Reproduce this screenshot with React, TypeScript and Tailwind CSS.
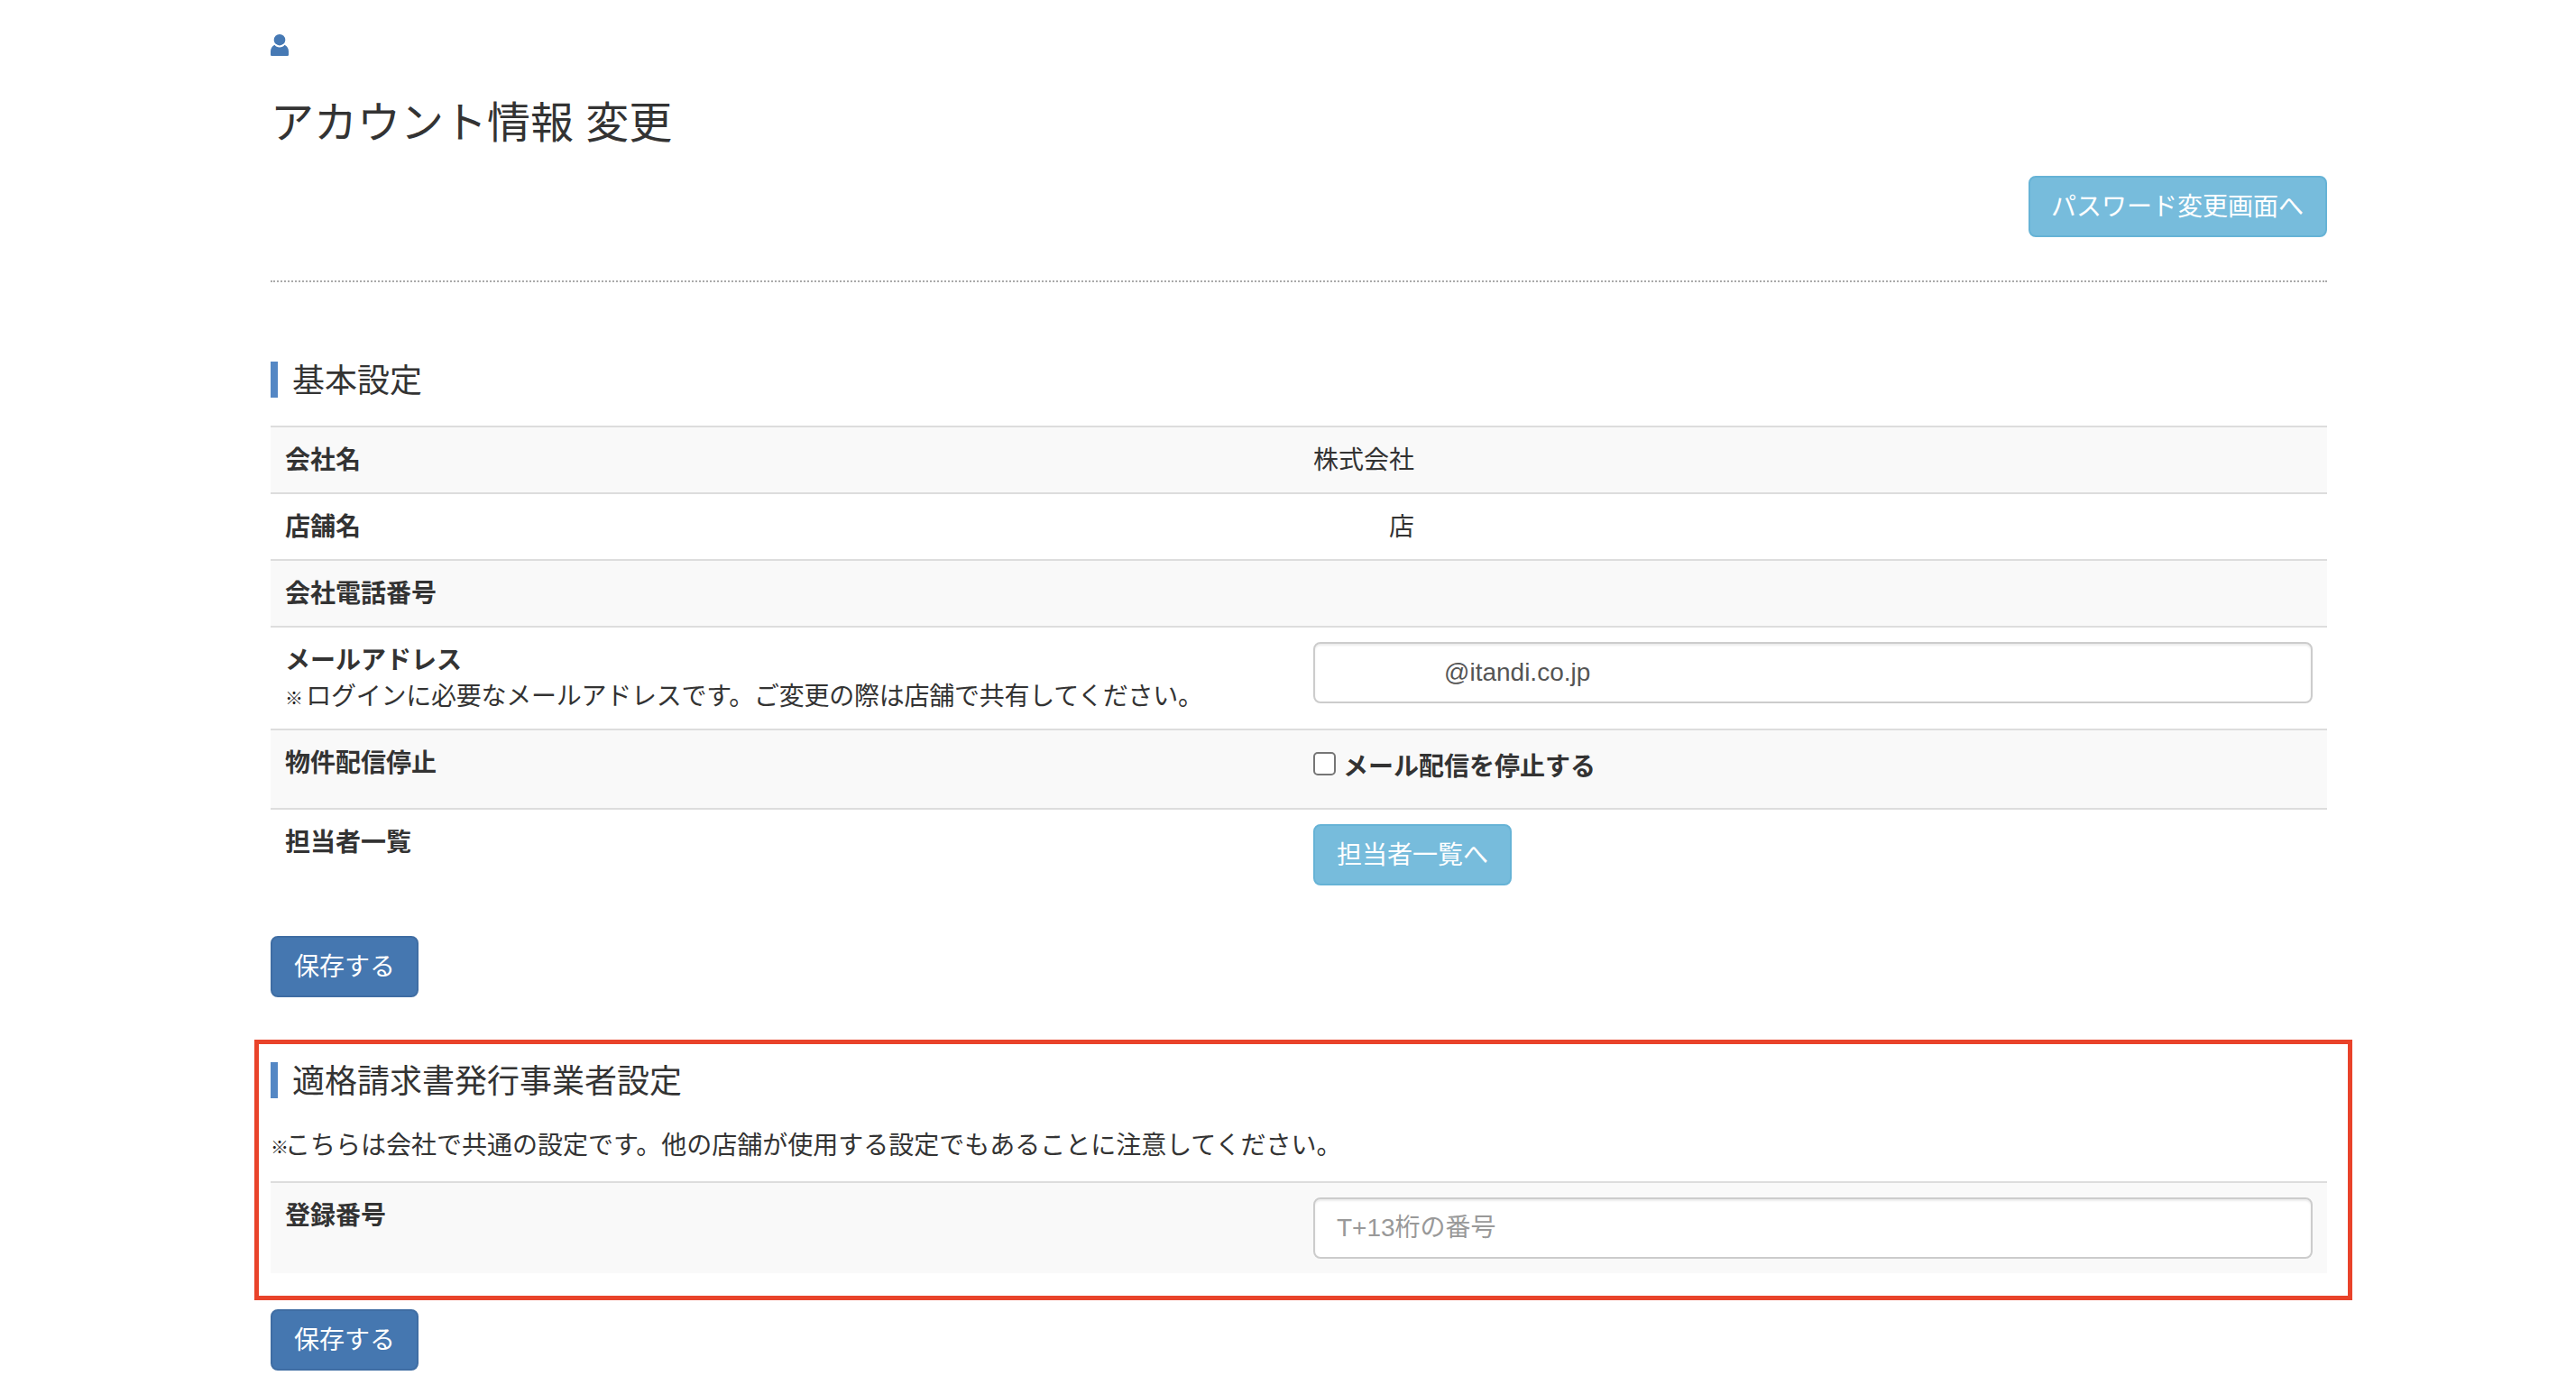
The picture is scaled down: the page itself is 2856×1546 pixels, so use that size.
const FONT = "font-['Liberation_Sans','Noto_Sans_CJK_JP',sans-serif]";

function Btn({ kind, narrow, children }: { kind: "info" | "primary"; narrow?: boolean; children: React.ReactNode }) {
  const color =
    kind === "info"
      ? "bg-[#77bcdc] border-[#66b3d6]"
      : "bg-[#4577b0] border-[#3f6da3]";
  return (
    <button
      type="button"
      className={`inline-block border-2 rounded-lg pr-6 pt-[13px] pb-[11px] text-[28px] leading-10 text-white whitespace-nowrap ${narrow ? "pl-[23px]" : "pl-6"} ${color}`}
    >
      {children}
    </button>
  );
}

function Heading({ children }: { children: React.ReactNode }) {
  return (
    <h3 className="h-10 border-l-8 border-[#5487c4] pl-4 text-4xl leading-[43px] text-[#333]">{children}</h3>
  );
}

function Row({
  label,
  striped,
  control,
  children,
}: {
  label: React.ReactNode;
  striped?: boolean;
  control?: boolean;
  children?: React.ReactNode;
}) {
  return (
    <div className={`grid grid-cols-2 border-t-2 border-[#ddd] ${striped ? "bg-[#f9f9f9]" : "bg-white"}`}>
      <div className="px-4 pt-[17px] pb-[15px]">{label}</div>
      <div className={control ? "p-4" : "px-4 pt-[17px] pb-[15px]"}>{children}</div>
    </div>
  );
}

function TextInput({ value, placeholder, pad }: { value?: string; placeholder?: string; pad?: boolean }) {
  return (
    <input
      type="text"
      readOnly
      defaultValue={value}
      placeholder={placeholder}
      className={`block w-full h-[68px] border-2 border-[#ccc] rounded-lg bg-white pr-6 text-[28px] text-[#555] placeholder:text-[#999] shadow-[inset_0_2px_2px_rgba(0,0,0,0.075)] outline-none ${pad ? "pl-[143px]" : "pl-6"}`}
    />
  );
}

function UserIcon() {
  return (
    <svg viewBox="0 0 20 24" className="block w-5 h-6" fill="#4679b4" aria-hidden="true">
      <ellipse cx="10" cy="6.2" rx="6.3" ry="6.2" />
      <path d="M4.5 11.8C5.6 13.6 7.6 14.5 10 14.5s4.4-.9 5.5-2.7C18.4 13.2 20 16 20 19v3.5c0 1-.7 1.5-1.5 1.5h-17C.7 24 0 23.5 0 22.5V19c0-3 1.6-5.8 4.5-7.2Z" />
    </svg>
  );
}

export default function App() {
  return (
    <div className={`min-h-[1546px] bg-white pl-[300px] pr-[276px] pt-[38px] text-[28px] leading-10 text-[#333] ${FONT}`}>
      <UserIcon />
      <h2 className="pt-12 pb-[32px] text-5xl leading-[53px] font-normal">アカウント情報 変更</h2>
      <div className="flex justify-end">
        <Btn kind="info" narrow>パスワード変更画面へ</Btn>
      </div>
      <div className="mt-12 border-t-2 border-dotted border-[#aaa]" />

      <div className="mt-[88px]">
        <Heading>基本設定</Heading>
      </div>
      <div className="mt-[31px]">
        <Row striped label={<b>会社名</b>}>株式会社</Row>
        <Row label={<b>店舗名</b>}>
          <span className="pl-[84px]">店</span>
        </Row>
        <Row striped label={<b>会社電話番号</b>}>
          <span>&nbsp;</span>
        </Row>
        <Row
          control
          label={
            <>
              <b className="block">メールアドレス</b>
              <span className="block tracking-[-0.25px]">
                <span className="text-[20px] leading-none font-bold text-[#222] -mr-[4px]">※</span> ログインに必要なメールアドレスです。ご変更の際は店舗で共有してください。
              </span>
            </>
          }
        >
          <TextInput value="@itandi.co.jp" pad />
        </Row>
        <Row striped control label={<b>物件配信停止</b>}>
          <label className="flex items-start gap-2 pb-[14px]">
            <input
              type="checkbox"
              className="appearance-none w-[25px] h-[26px] mt-2 border-2 border-[#767676] rounded-[5px] bg-white"
            />
            <b className="pt-[5px] -mb-[5px]">メール配信を停止する</b>
          </label>
        </Row>
        <Row control label={<b>担当者一覧</b>}>
          <Btn kind="info">担当者一覧へ</Btn>
        </Row>
      </div>

      <div className="mt-10">
        <Btn kind="primary">保存する</Btn>
      </div>

      <section className="mt-[47px] -ml-[18px] -mr-[28px] border-[5px] border-[#e9432a] pl-[13px] pr-[23px] pt-5 pb-[25px]">
        <Heading>適格請求書発行事業者設定</Heading>
        <p className="pt-[33px] pb-[19px]">
          <span className="text-[20px] leading-none font-bold text-[#222] -mr-[4px]">※</span>こちらは会社で共通の設定です。他の店舗が使用する設定でもあることに注意してください。
        </p>
        <Row striped control label={<b>登録番号</b>}>
          <TextInput placeholder="T+13桁の番号" />
        </Row>
      </section>

      <div className="mt-[10px]">
        <Btn kind="primary">保存する</Btn>
      </div>
    </div>
  );
}
